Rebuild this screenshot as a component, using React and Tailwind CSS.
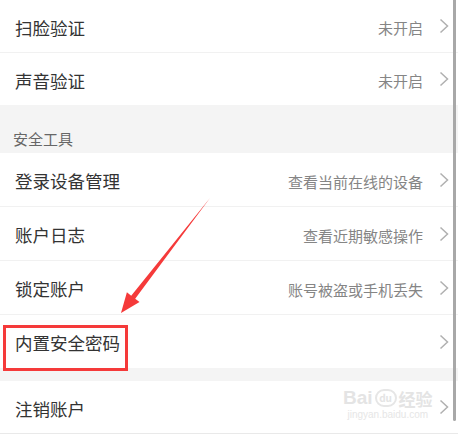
import React from "react";

const font = { fontFamily: '"Noto Sans CJK SC", "Noto Sans", sans-serif' };

function Chevron() {
    return (
        <svg width="10" height="16" viewBox="0 0 10 16" className="ml-[16px] shrink-0">
            <path d="M1.5 1.5 L8.5 8 L1.5 14.5" fill="none" stroke="#b0b0b0" strokeWidth="1.5" />
        </svg>
    );
}

function Row({ title, hint, h, border = true }) {
    return (
        <div
            className={`flex items-center bg-white pl-[15px] pr-[9px] ${h} ${border ? "border-b border-[#f1f1f1]" : ""}`}
        >
            <span className="text-[17.5px] text-[#333333] flex-1 leading-none pt-[3px]">{title}</span>
            {hint && <span className="text-[15px] text-[#858585] leading-none pt-[3px]">{hint}</span>}
            <Chevron />
        </div>
    );
}

export default function App() {
    return (
        <div className="relative w-[458px] h-[435px] overflow-hidden bg-[#f4f4f4]" style={font}>
            <Row title="扫脸验证" hint="未开启" h="h-[53px]" />
            <Row title="声音验证" hint="未开启" h="h-[52px]" border={false} />

            <div className="h-[48px] pl-[13px] pt-[21px]">
                <span className="text-[15px] text-[#666666] leading-[20px]">安全工具</span>
            </div>

            <Row title="登录设备管理" hint="查看当前在线的设备" h="h-[54px]" />
            <Row title="账户日志" hint="查看近期敏感操作" h="h-[54px]" />
            <Row title="锁定账户" hint="账号被盗或手机丢失" h="h-[54px]" />
            <Row title="内置安全密码" h="h-[53px]" border={false} />

            <div className="h-[13px]" />

            <Row title="注销账户" h="h-[52px]" border={false} />
            <div className="h-[1px] bg-[#e9e9e9]" />
            <div className="h-[2px] bg-white" />

            {/* watermark */}
            <div className="absolute left-[343px] top-[388px] flex flex-col items-center pointer-events-none">
                <div className="flex items-end text-[#e4e4e4] font-bold leading-none">
                    <span className="text-[19px]" style={{ fontFamily: '"Liberation Sans", sans-serif' }}>Bai</span>
                    <span className="mx-[2px] w-[22px] h-[18px] rounded-full border-2 border-[#e6e6e6] text-[10px] flex items-center justify-center">du</span>
                    <span className="text-[17px]">经验</span>
                </div>
                <span className="text-[10px] text-[#e6e6e6] leading-none mt-[3px]" style={{ fontFamily: '"Liberation Sans", sans-serif' }}>jingyan.baidu.com</span>
            </div>

            {/* scrollbar */}
            <div className="absolute right-[2px] top-0 w-[3px] h-[421px] bg-[#a8a8a8] rounded-b" />

            {/* annotation box */}
            <div className="absolute left-[3px] top-[325px] w-[125px] h-[46px] border-[3px] border-[#f53a3a]" />

            {/* annotation arrow */}
            <svg className="absolute left-0 top-0 pointer-events-none" width="458" height="435">
                <polygon
                    points="210,198 135.2,298.7 139.5,302.1 121,313 126.9,292.3 131.2,295.7"
                    fill="#f53a3a"
                />
            </svg>
        </div>
    );
}
